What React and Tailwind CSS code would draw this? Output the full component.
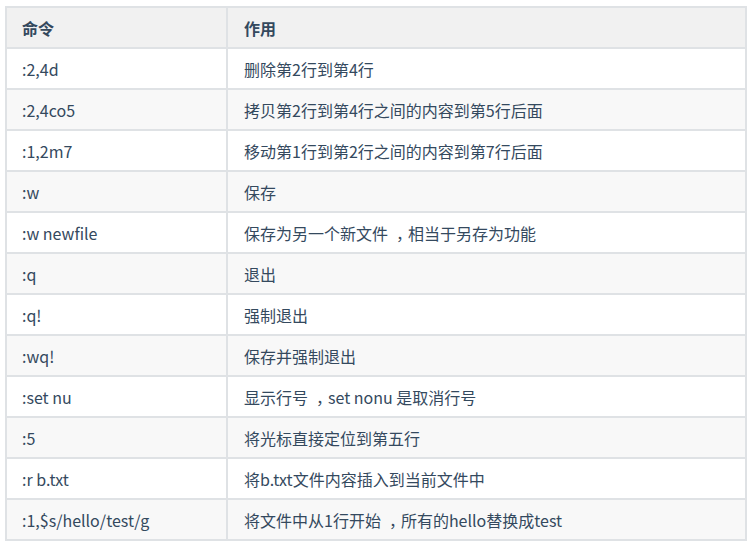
const rows = [
  [':2,4d', '删除第2行到第4行'],
  [':2,4co5', '拷贝第2行到第4行之间的内容到第5行后面'],
  [':1,2m7', '移动第1行到第2行之间的内容到第7行后面'],
  [':w', '保存'],
  [':w newfile', '保存为另一个新文件，相当于另存为功能'],
  [':q', '退出'],
  [':q!', '强制退出'],
  [':wq!', '保存并强制退出'],
  [':set nu', '显示行号，set nonu 是取消行号'],
  [':5', '将光标直接定位到第五行'],
  [':r b.txt', '将b.txt文件内容插入到当前文件中'],
  [':1,$s/hello/test/g', '将文件中从1行开始，所有的hello替换成test'],
];

// full-width comma sits centred in a slightly wider box in the reference
function Desc({ text }) {
  const parts = text.split('，');
  return (
    <>
      {parts.map((p, i) => (
        <span key={i}>
          {p}
          {i < parts.length - 1 && <span className="pl-[8px] tracking-[-4px]">，</span>}
        </span>
      ))}
    </>
  );
}

export default function App() {
  return (
    <div className="w-[751px] h-[556px] bg-white pt-[6px] pl-[5px] text-[16px] text-[#34495e] font-['Noto_Sans_CJK_SC','Noto_Sans',sans-serif]">
      <div className="w-[742px] border-2 border-[#dfe2e5]">
        {/* Header */}
        <div className="flex h-[39px] bg-[#f1f1f1] font-bold">
          <div className="w-[221px] border-r-2 border-[#dfe2e5] pl-[15px] flex items-center">命令</div>
          <div className="flex-1 pl-[16px] flex items-center">作用</div>
        </div>
        {rows.map(([cmd, desc], i) => (
          <div key={cmd} className={`flex h-[41px] border-t-2 border-[#dfe2e5] ${i % 2 === 1 ? 'bg-[#f8f8f8]' : 'bg-white'}`}>
            <div className="w-[221px] border-r-2 border-[#dfe2e5] pl-[15px] flex items-center">{cmd}</div>
            <div className="flex-1 pl-[16px] flex items-center whitespace-pre">
              <Desc text={desc} />
            </div>
          </div>
        ))}
      </div>
    </div>
  );
}
